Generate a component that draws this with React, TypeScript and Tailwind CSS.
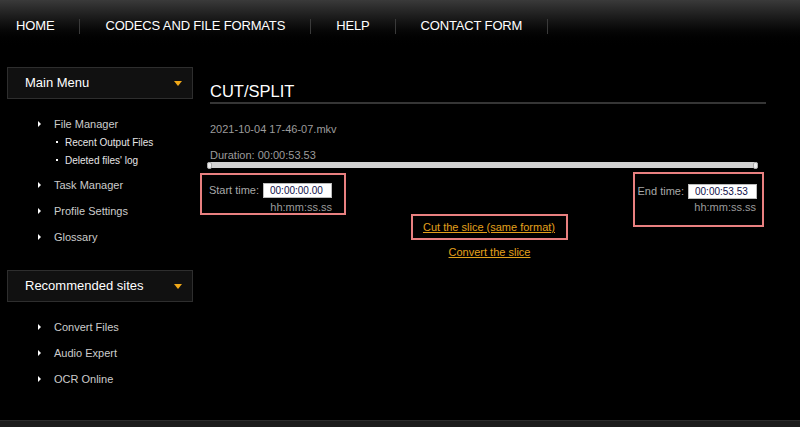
import React from 'react'

const nav = ['HOME', 'CODECS AND FILE FORMATS', 'HELP', 'CONTACT FORM']

const MenuBox = ({ title }: { title: string }) => (
  <div className="h-[32px] flex items-center justify-between border border-[#2e2e2e] bg-[#111111] pl-[17px] pr-[10px]">
    <span className="text-[13px] text-white">{title}</span>
    <span className="w-0 h-0 border-x-[4px] border-x-transparent border-t-[5px] border-t-[#f0a818]"></span>
  </div>
)

const Item = ({ label }: { label: string }) => (
  <li className="h-[26px] flex items-center pl-[31px]">
    <span className="w-0 h-0 border-y-[3px] border-y-transparent border-l-[3px] border-l-white"></span>
    <span className="ml-[13px] text-[11px] text-[#cccccc]">{label}</span>
  </li>
)

const SubItem = ({ label }: { label: string }) => (
  <li className="h-[18px] flex items-center pl-[49px]">
    <span className="w-[2px] h-[2px] bg-white"></span>
    <span className="ml-[7px] text-[10px] text-[#e6e6e6]">{label}</span>
  </li>
)

const TimeField = ({ value }: { value: string }) => (
  <input
    readOnly
    value={value}
    className="w-[69px] h-[15px] bg-white border border-[#bbbbbb] pl-[6px] text-[10px] text-[#10104a] outline-none"
  />
)

export default function App() {
  return (
    <div className="w-[800px] h-[427px] bg-black flex flex-col overflow-hidden font-['Liberation_Sans',Arial,sans-serif]">
      {/* top navigation */}
      <header className="h-[48px] shrink-0 bg-gradient-to-b from-[#3a3a3a] to-black flex items-center pl-[16px] pt-[4px]">
        {nav.map((n, i) => (
          <div key={n} className="flex items-center">
            {i > 0 && <span className="w-px h-[15px] bg-[#3a3a3a] mx-[25px]"></span>}
            <span className="text-[13px] tracking-[-0.15px] text-white">{n}</span>
          </div>
        ))}
        <span className="w-px h-[15px] bg-[#3a3a3a] ml-[25px]"></span>
      </header>

      <div className="flex-1 flex pt-[19px]">
        {/* sidebar */}
        <aside className="ml-[7px] w-[186px] shrink-0">
          <MenuBox title="Main Menu" />
          <ul className="mt-[12px]">
            <Item label="File Manager" />
            <ul className="-mt-[4px]">
              <SubItem label="Recent Output Files" />
              <SubItem label="Deleted files' log" />
            </ul>
            <div className="mt-[3px]">
              <Item label="Task Manager" />
              <Item label="Profile Settings" />
              <Item label="Glossary" />
            </div>
          </ul>
          <div className="mt-[20px]">
            <MenuBox title="Recommended sites" />
          </div>
          <ul className="mt-[12px]">
            <Item label="Convert Files" />
            <Item label="Audio Expert" />
            <Item label="OCR Online" />
          </ul>
        </aside>

        {/* main content */}
        <main className="ml-[7px] w-[566px]">
          <h1 className="ml-[10px] mt-[14px] text-[16.5px] leading-[20px] text-white pb-[1px] border-b-2 border-[#353535]">
            CUT/SPLIT
          </h1>
          <p className="ml-[10px] mt-[19px] text-[11px] leading-[13px] text-[#9c9c9c]">2021-10-04 17-46-07.mkv</p>
          <p className="ml-[10px] mt-[13px] text-[11px] leading-[13px] text-[#9c9c9c]">Duration: 00:00:53.53</p>
          <div className="ml-[7px] w-[551px] h-[6px] rounded-full bg-[#d2d2d2] flex justify-between">
            <span className="w-[5px] h-[7px] -mt-[0.5px] rounded-[2px] bg-[#eeeeee] border border-[#aaaaaa]"></span>
            <span className="w-[5px] h-[7px] -mt-[0.5px] rounded-[2px] bg-[#eeeeee] border border-[#aaaaaa]"></span>
          </div>

          <div className="mt-[4px] mr-[2px] flex items-start">
            <div className="mt-[1px] w-[146px] h-[42px] border-2 border-[#e88080] pt-[7px] pr-[12px]">
              <div className="flex items-center justify-end gap-[4px]">
                <span className="text-[11px] text-[#a8a8a8]">Start time:</span>
                <TimeField value="00:00:00.00" />
              </div>
              <div className="mt-[2px] text-right text-[11px] leading-[13px] text-[#9c9c9c]">hh:mm:ss.ss</div>
            </div>

            <div className="flex-1 flex flex-col items-center pt-[42px]">
              <div className="h-[26px] flex items-center border-2 border-[#e88080] pl-[10px] pr-[11px]">
                <a className="text-[11px] text-[#e3a11c] underline">Cut the slice (same format)</a>
              </div>
              <a className="mt-[6px] text-[11px] leading-[13px] text-[#e3a11c] underline">Convert the slice</a>
            </div>

            <div className="w-[131px] h-[55px] border-2 border-[#e88080] pt-[9px] pr-[5px]">
              <div className="flex items-center justify-end gap-[4px]">
                <span className="text-[11px] text-[#a8a8a8]">End time:</span>
                <TimeField value="00:00:53.53" />
              </div>
              <div className="mt-[1px] pr-[1px] text-right text-[11px] leading-[13px] text-[#9c9c9c]">hh:mm:ss.ss</div>
            </div>
          </div>
        </main>
      </div>

      <footer className="h-[7px] shrink-0 bg-[#1c1c1c] border-t border-[#2c2c2c]"></footer>
    </div>
  )
}
